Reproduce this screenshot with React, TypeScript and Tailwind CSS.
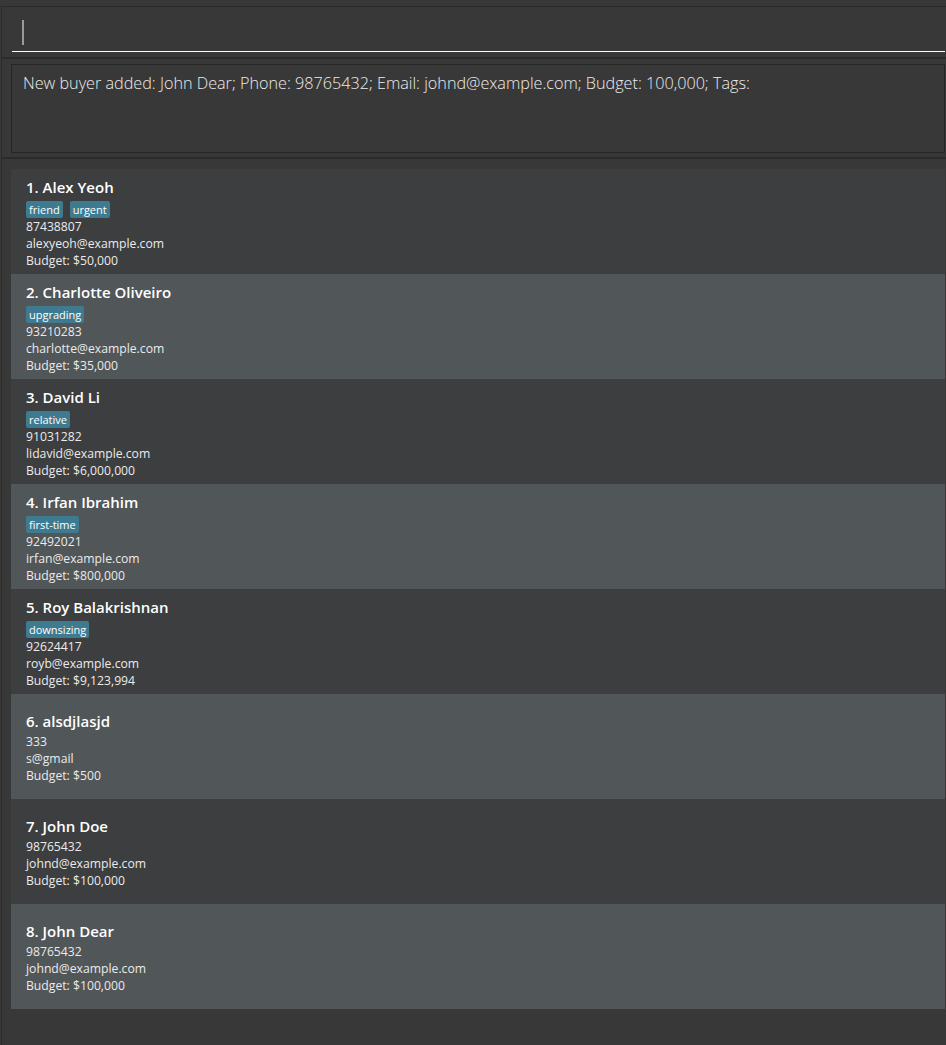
import React from "react";

type Person = { name: string; tags: string[]; phone: string; email: string; budget: string };

const people: Person[] = [
  { name: "Alex Yeoh", tags: ["friend", "urgent"], phone: "87438807", email: "alexyeoh@example.com", budget: "$50,000" },
  { name: "Charlotte Oliveiro", tags: ["upgrading"], phone: "93210283", email: "charlotte@example.com", budget: "$35,000" },
  { name: "David Li", tags: ["relative"], phone: "91031282", email: "lidavid@example.com", budget: "$6,000,000" },
  { name: "Irfan Ibrahim", tags: ["first-time"], phone: "92492021", email: "irfan@example.com", budget: "$800,000" },
  { name: "Roy Balakrishnan", tags: ["downsizing"], phone: "92624417", email: "royb@example.com", budget: "$9,123,994" },
  { name: "alsdjlasjd", tags: [], phone: "333", email: "s@gmail", budget: "$500" },
  { name: "John Doe", tags: [], phone: "98765432", email: "johnd@example.com", budget: "$100,000" },
  { name: "John Dear", tags: [], phone: "98765432", email: "johnd@example.com", budget: "$100,000" },
];

const font = { fontFamily: '"Segoe UI", "Open Sans", "Noto Sans", sans-serif' };

export default function App() {
  return (
    <div className="w-[946px] h-[1045px] bg-[#383838] pt-[6px] pl-[1px] flex flex-col overflow-hidden" style={font}>
      {/* command box */}
      <div className="h-[51px] border-t border-l border-[#2b2b2b] pl-[10px] pr-[1px] pt-[12px] shrink-0">
        <div className="h-[33px] border-b border-white flex items-start">
          <div className="ml-[10px] mt-[1px] w-[2px] h-[25px] bg-[#9a9a9a]" />
        </div>
      </div>
      <div className="h-[2px] bg-[#2b2b2b] shrink-0" />
      {/* result display */}
      <div className="h-[98px] border-l border-[#2b2b2b] pl-[9px] pr-[1px] pt-[5px] shrink-0">
        <div className="h-[89px] border border-[#262626] px-[11px] pt-[8px]">
          <p className="text-[16.2px] leading-[20px] text-[#ececec] font-light">
            New buyer added: John Dear; Phone: 98765432; Email: johnd@example.com; Budget: 100,000; Tags:
          </p>
        </div>
      </div>
      <div className="h-[2px] bg-[#2b2b2b] shrink-0" />
      {/* list */}
      <div className="flex-1 border-l border-[#2b2b2b] pl-[9px] pr-[1px] pt-[10px]">
        {people.map((p, i) => (
          <div
            key={i}
            className={`h-[105px] flex flex-col justify-center pl-[15px] ${i % 2 === 0 ? "bg-[#3c3e3f]" : "bg-[#515658]"}`}
          >
            <div className="text-[15px] leading-[24px] font-semibold text-white">
              {i + 1}. {p.name}
            </div>
            {p.tags.length > 0 && (
              <div className="flex gap-[7px] mt-[2px]">
                {p.tags.map((t) => (
                  <span key={t} className="bg-[#3e7b91] text-white text-[11px] leading-[17px] px-[3px] rounded-[2px]">
                    {t}
                  </span>
                ))}
              </div>
            )}
            <div className="text-[12.2px] leading-[17px] text-[#ebebeb]">{p.phone}</div>
            <div className="text-[12.2px] leading-[17px] text-[#ebebeb]">{p.email}</div>
            <div className="text-[12.2px] leading-[17px] text-[#ebebeb]">Budget: {p.budget}</div>
          </div>
        ))}
      </div>
    </div>
  );
}
